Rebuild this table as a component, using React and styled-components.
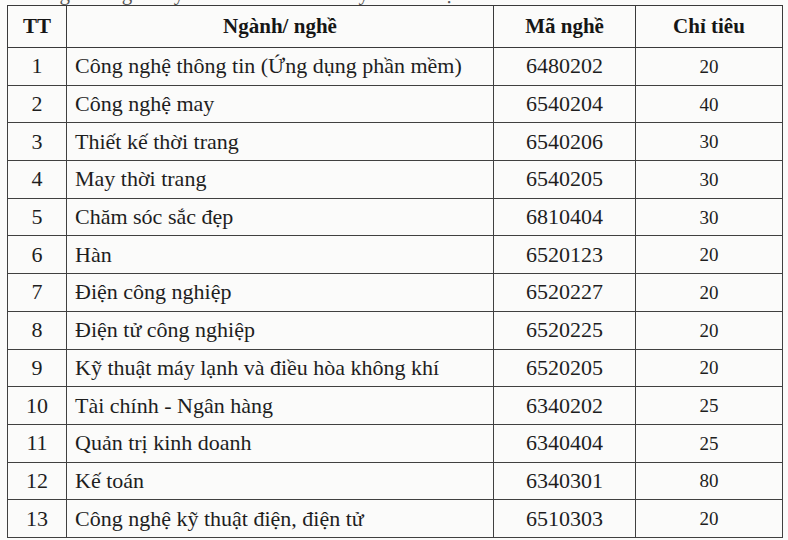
import React from "react";
import styled, { createGlobalStyle } from "styled-components";

const GlobalStyle = createGlobalStyle`
  html, body {
    margin: 0;
    padding: 0;
    background: #fbfbfa;
  }
  body {
    font-family: "Liberation Serif", "Times New Roman", serif;
    color: #1c1c1c;
  }
`;

const Page = styled.div`
  width: 788px;
  height: 540px;
  overflow: hidden;
  padding-left: 7px;
  box-sizing: border-box;
`;

// the scan cuts the sentence above the table, only descenders show
const CutLine = styled.div`
  height: 4.5px;
  overflow: hidden;
`;

const CutText = styled.div`
  font-size: 21px;
  line-height: 22px;
  margin-top: -18px;
  padding-left: 4px;
  color: #555;
  white-space: nowrap;
`;

const Table = styled.table`
  border-collapse: collapse;
  table-layout: fixed;
  width: 775px;
  border: 1.5px solid #3a3a3a;
`;

const Th = styled.th`
  height: 41.5px;
  padding: 0;
  font-size: 21px;
  font-weight: 700;
  text-align: center;
  vertical-align: middle;
  border: 1.5px solid #3a3a3a;
  color: #161616;
`;

const Td = styled.td`
  height: 36.7px;
  padding: 0 ${(p) => (p.$left ? "8px" : "0")};
  font-size: ${(p) => (p.$small ? "19px" : "22px")};
  line-height: 1;
  text-align: ${(p) => (p.$left ? "left" : "center")};
  vertical-align: middle;
  border: 1.5px solid #404040;
  white-space: nowrap;
  color: #1e1e1e;
`;

const rows = [
  ["1", "Công nghệ thông tin (Ứng dụng phần mềm)", "6480202", "20"],
  ["2", "Công nghệ may", "6540204", "40"],
  ["3", "Thiết kế thời trang", "6540206", "30"],
  ["4", "May thời trang", "6540205", "30"],
  ["5", "Chăm sóc sắc đẹp", "6810404", "30"],
  ["6", "Hàn", "6520123", "20"],
  ["7", "Điện công nghiệp", "6520227", "20"],
  ["8", "Điện tử công nghiệp", "6520225", "20"],
  ["9", "Kỹ thuật máy lạnh và điều hòa không khí", "6520205", "20"],
  ["10", "Tài chính - Ngân hàng", "6340202", "25"],
  ["11", "Quản trị kinh doanh", "6340404", "25"],
  ["12", "Kế toán", "6340301", "80"],
  ["13", "Công nghệ kỹ thuật điện, điện tử", "6510303", "20"],
];

export default function App() {
  return (
    <Page>
      <GlobalStyle />
      <CutLine>
        <CutText>Các ngành/ nghề tuyển sinh và chỉ tiêu tuyển sinh cụ thể như sau:</CutText>
      </CutLine>
      <Table>
        <colgroup>
          <col style={{ width: 59 }} />
          <col style={{ width: 427 }} />
          <col style={{ width: 142 }} />
          <col style={{ width: 147 }} />
        </colgroup>
        <thead>
          <tr>
            <Th>TT</Th>
            <Th>Ngành/ nghề</Th>
            <Th>Mã nghề</Th>
            <Th>Chỉ tiêu</Th>
          </tr>
        </thead>
        <tbody>
          {rows.map((r) => (
            <tr key={r[0]}>
              <Td>{r[0]}</Td>
              <Td $left>{r[1]}</Td>
              <Td>{r[2]}</Td>
              <Td $small>{r[3]}</Td>
            </tr>
          ))}
        </tbody>
      </Table>
    </Page>
  );
}
